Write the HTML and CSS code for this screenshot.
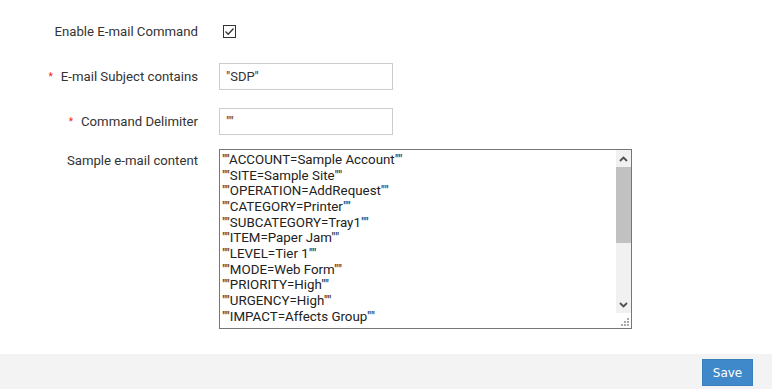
FILE: index.html
```html
<!DOCTYPE html>
<html>
<head>
<meta charset="utf-8">
<title>E-mail Command</title>
<link rel="stylesheet" href="styles.css">
</head>
<body>

<div id="page">
	<form id="settings">
		<div class="row">
			<label class="label">Enable E-mail Command</label>
			<div class="field">
				<span class="check">
					<svg width="11" height="11" viewBox="0 0 11 11"><polyline points="1.5,5.5 4.2,8.2 9.5,2.5" fill="none" stroke="#333" stroke-width="1.3"/></svg>
				</span>
			</div>
		</div>

		<div class="row">
			<label class="label"><span class="req">*</span>E-mail Subject contains</label>
			<div class="field"><input class="text" type="text" value='"SDP"'></div>
		</div>

		<div class="row">
			<label class="label"><span class="req">*</span>Command Delimiter</label>
			<div class="field"><input class="text" type="text" value='""'></div>
		</div>

		<div class="row" id="contentRow">
			<label class="label">Sample e-mail content</label>
			<div class="field">
				<div id="areaBox">
					<textarea id="sample" spellcheck="false">""ACCOUNT=Sample Account""
""SITE=Sample Site""
""OPERATION=AddRequest""
""CATEGORY=Printer""
""SUBCATEGORY=Tray1""
""ITEM=Paper Jam""
""LEVEL=Tier 1""
""MODE=Web Form""
""PRIORITY=High""
""URGENCY=High""
""IMPACT=Affects Group""

""GROUP=Network""
""TECHNICIAN=Howard Stern""
""STATUS=Open""
""REQUESTTYPE=Incident""
""REQUESTER=Guest""
""DUEBYTIME=30 Jun 2024, 17:00""
""SERVICECATEGORY=Hardware""
""ASSET=Printer-01""
""DESCRIPTION=Paper stuck in tray""
""SUBJECT=Printer not working""</textarea>
					<div class="scrollbar">
						<div class="arrow">
							<svg width="9" height="6" viewBox="0 0 9 6"><polyline points="1,5 4.5,1.5 8,5" fill="none" stroke="#505050" stroke-width="1.8"/></svg>
						</div>
						<div class="track">
							<div class="thumb"></div>
						</div>
						<div class="arrow">
							<svg width="9" height="6" viewBox="0 0 9 6"><polyline points="1,1 4.5,4.5 8,1" fill="none" stroke="#505050" stroke-width="1.8"/></svg>
						</div>
						<div class="corner">
							<svg width="8" height="8" viewBox="0 0 8 8" fill="#aaa">
								<rect x="6" y="0" width="2" height="2"/>
								<rect x="3" y="3" width="2" height="2"/>
								<rect x="6" y="3" width="2" height="2"/>
								<rect x="0" y="6" width="2" height="2"/>
								<rect x="3" y="6" width="2" height="2"/>
								<rect x="6" y="6" width="2" height="2"/>
							</svg>
						</div>
					</div>
				</div>
			</div>
		</div>
	</form>

	<div id="footer">
		<button class="button" type="button">Save</button>
	</div>
</div>

</body>
</html>
```

FILE: styles.css
```css
	body {
		margin: 0;
		background-color: #fff;
		font-family: Roboto, "Liberation Sans", sans-serif;
		font-size: 13px;
		color: #333;
	}

	#settings {
		padding: 18px 0 25px 0;
	}

	.row {
		display: grid;
		grid-template-columns: 198px 413px;
		column-gap: 21px;
		align-items: center;
		min-height: 27px;
	}

	.row + .row {
		margin-top: 18px;
	}

	#contentRow {
		margin-top: 14px;
		align-items: start;
	}

	#contentRow .label {
		padding-top: 4px;
	}

	.label {
		text-align: right;
		color: #333;
		font-size: 13.2px;
	}

	.req {
		color: #f01818;
		font-size: 10px;
		margin-right: 8px;
		position: relative;
		top: -1px;
	}

	.field {
		display: flex;
		align-items: center;
	}

	.check {
		display: flex;
		align-items: center;
		justify-content: center;
		width: 11px;
		height: 11px;
		border: 1px solid #333;
		margin-left: 4px;
		background-color: #fff;
	}

	.text {
		box-sizing: border-box;
		width: 174px;
		height: 27px;
		border: 1px solid #ccc;
		padding: 0 6px;
		font-family: Roboto, "Liberation Sans", sans-serif;
		font-size: 13px;
		color: #333;
		outline: none;
	}

	#areaBox {
		display: flex;
		box-sizing: border-box;
		width: 413px;
		height: 180px;
		border: 1px solid #767676;
		background-color: #fff;
	}

	#sample {
		flex: 1;
		margin: 0;
		border: none;
		padding: 2px 2px;
		font-family: Roboto, "Liberation Sans", sans-serif;
		font-size: 13.33px;
		line-height: 15.67px;
		color: #222;
		outline: none;
		overflow: hidden;
		resize: none;
	}

	.scrollbar {
		display: flex;
		flex-direction: column;
		width: 15px;
		background-color: #f1f1f1;
	}

	.arrow {
		display: flex;
		align-items: center;
		justify-content: center;
		height: 17px;
	}

	.track {
		flex: 1;
	}

	.thumb {
		height: 76px;
		background-color: #c1c1c1;
	}

	.corner {
		display: flex;
		align-items: flex-end;
		justify-content: flex-end;
		height: 15px;
		padding: 0 2px 2px 0;
		box-sizing: border-box;
		background-color: #fff;
	}

	#footer {
		display: flex;
		justify-content: flex-end;
		background-color: #f3f3f3;
		padding: 5px 19px 5px 0;
	}

	.button {
		width: 51px;
		height: 27px;
		background-color: #3f88ca;
		border: 1px solid #3a7ebd;
		border-radius: 0;
		color: #fff;
		font-family: "DejaVu Sans", sans-serif;
		font-size: 12px;
		padding: 0;
		cursor: pointer;
	}

	.button:hover {background-color: #3479b8;}
```
